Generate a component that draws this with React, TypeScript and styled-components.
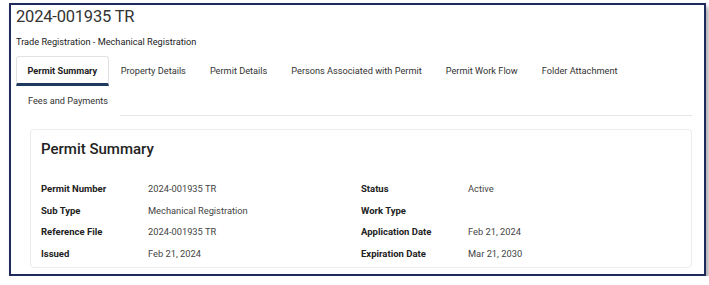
import React from "react"
import styled, { createGlobalStyle } from "styled-components"

const GlobalStyle = createGlobalStyle`
  html, body {
    margin: 0;
    padding: 0;
    background: #ffffff;
    font-family: Roboto, "Liberation Sans", Arial, sans-serif;
    color: #333;
  }
`

type Field = { label: string; value: string }

const leftFields: Field[] = [
  { label: "Permit Number", value: "2024-001935 TR" },
  { label: "Sub Type", value: "Mechanical Registration" },
  { label: "Reference File", value: "2024-001935 TR" },
  { label: "Issued", value: "Feb 21, 2024" },
]

const rightFields: Field[] = [
  { label: "Status", value: "Active" },
  { label: "Work Type", value: "" },
  { label: "Application Date", value: "Feb 21, 2024" },
  { label: "Expiration Date", value: "Mar 21, 2030" },
]

const tabs = [
  "Permit Summary",
  "Property Details",
  "Permit Details",
  "Persons Associated with Permit",
  "Permit Work Flow",
  "Folder Attachment",
  "Fees and Payments",
]

export default function App() {
  return (
    <>
      <GlobalStyle />
      <Frame>
        <Title>2024-001935 TR</Title>
        <Subtitle>Trade Registration - Mechanical Registration</Subtitle>
        <TabList>
          {tabs.map((t, i) => (
            <Tab key={t} $active={i === 0}>{t}</Tab>
          ))}
          <TabFiller />
        </TabList>
        <Card>
          <CardTitle>Permit Summary</CardTitle>
          <Columns>
            <FieldList>
              {leftFields.map(f => (
                <FieldRow key={f.label}>
                  <Label>{f.label}</Label>
                  <Value>{f.value}</Value>
                </FieldRow>
              ))}
            </FieldList>
            <FieldList>
              {rightFields.map(f => (
                <FieldRow key={f.label}>
                  <Label>{f.label}</Label>
                  <Value>{f.value}</Value>
                </FieldRow>
              ))}
            </FieldList>
          </Columns>
        </Card>
      </Frame>
    </>
  )
}

const Frame = styled.div`
  box-sizing: border-box;
  margin: 3px 0 0 9px;
  width: 697px;
  height: 273px;
  border: 2px solid #1f2b5c;
  box-shadow: 3px 4px 5px rgba(0, 0, 0, 0.35);
  padding: 1px 12px 0 5px;
  background: #fff;
  overflow: hidden;
`

const Title = styled.div`
  font-size: 16.5px;
  font-weight: 400;
  color: #333;
  line-height: 22px;
  letter-spacing: -0.2px;
`

const Subtitle = styled.div`
  margin-top: 7px;
  font-size: 9.2px;
  line-height: 14px;
  color: #222;
`

const TabList = styled.div`
  display: flex;
  flex-wrap: wrap;
  margin-top: 7px;
`

const Tab = styled.div<{ $active?: boolean }>`
  box-sizing: border-box;
  height: ${p => (p.$active ? "30px" : "29px")};
  padding: 0 ${p => (p.$active ? "10.5px" : "11px")};
  display: flex;
  align-items: center;
  font-size: 9.2px;
  color: ${p => (p.$active ? "#222" : "#333")};
  font-weight: ${p => (p.$active ? 700 : 400)};
  border: 1px solid ${p => (p.$active ? "#e2e2e2" : "transparent")};
  border-bottom: ${p => (p.$active ? "3px solid #1f3a5f" : "1px solid transparent")};
  border-radius: ${p => (p.$active ? "3px 3px 0 0" : "0")};
  white-space: nowrap;
`

const TabFiller = styled.div`
  flex: 1;
  align-self: flex-end;
  height: 29px;
  border-bottom: 1px solid #e6e6e6;
`

const Card = styled.div`
  margin: 13px 0 0 14px;
  border: 1px solid #ececec;
  border-radius: 4px;
  padding: 9px 10px 6px 10px;
  height: 139px;
  box-sizing: border-box;
`

const CardTitle = styled.div`
  font-size: 15px;
  font-weight: 500;
  color: #222;
  line-height: 20px;
`

const Columns = styled.div`
  display: grid;
  grid-template-columns: 320px 1fr;
  margin-top: 19px;
`

const FieldList = styled.div`
  display: flex;
  flex-direction: column;
`

const FieldRow = styled.div`
  display: grid;
  grid-template-columns: 107px 1fr;
  height: 21.5px;
  align-items: center;
`

const Label = styled.span`
  font-size: 9.5px;
  font-weight: 700;
  color: #222;
`

const Value = styled.span`
  font-size: 9.3px;
  color: #444;
`
